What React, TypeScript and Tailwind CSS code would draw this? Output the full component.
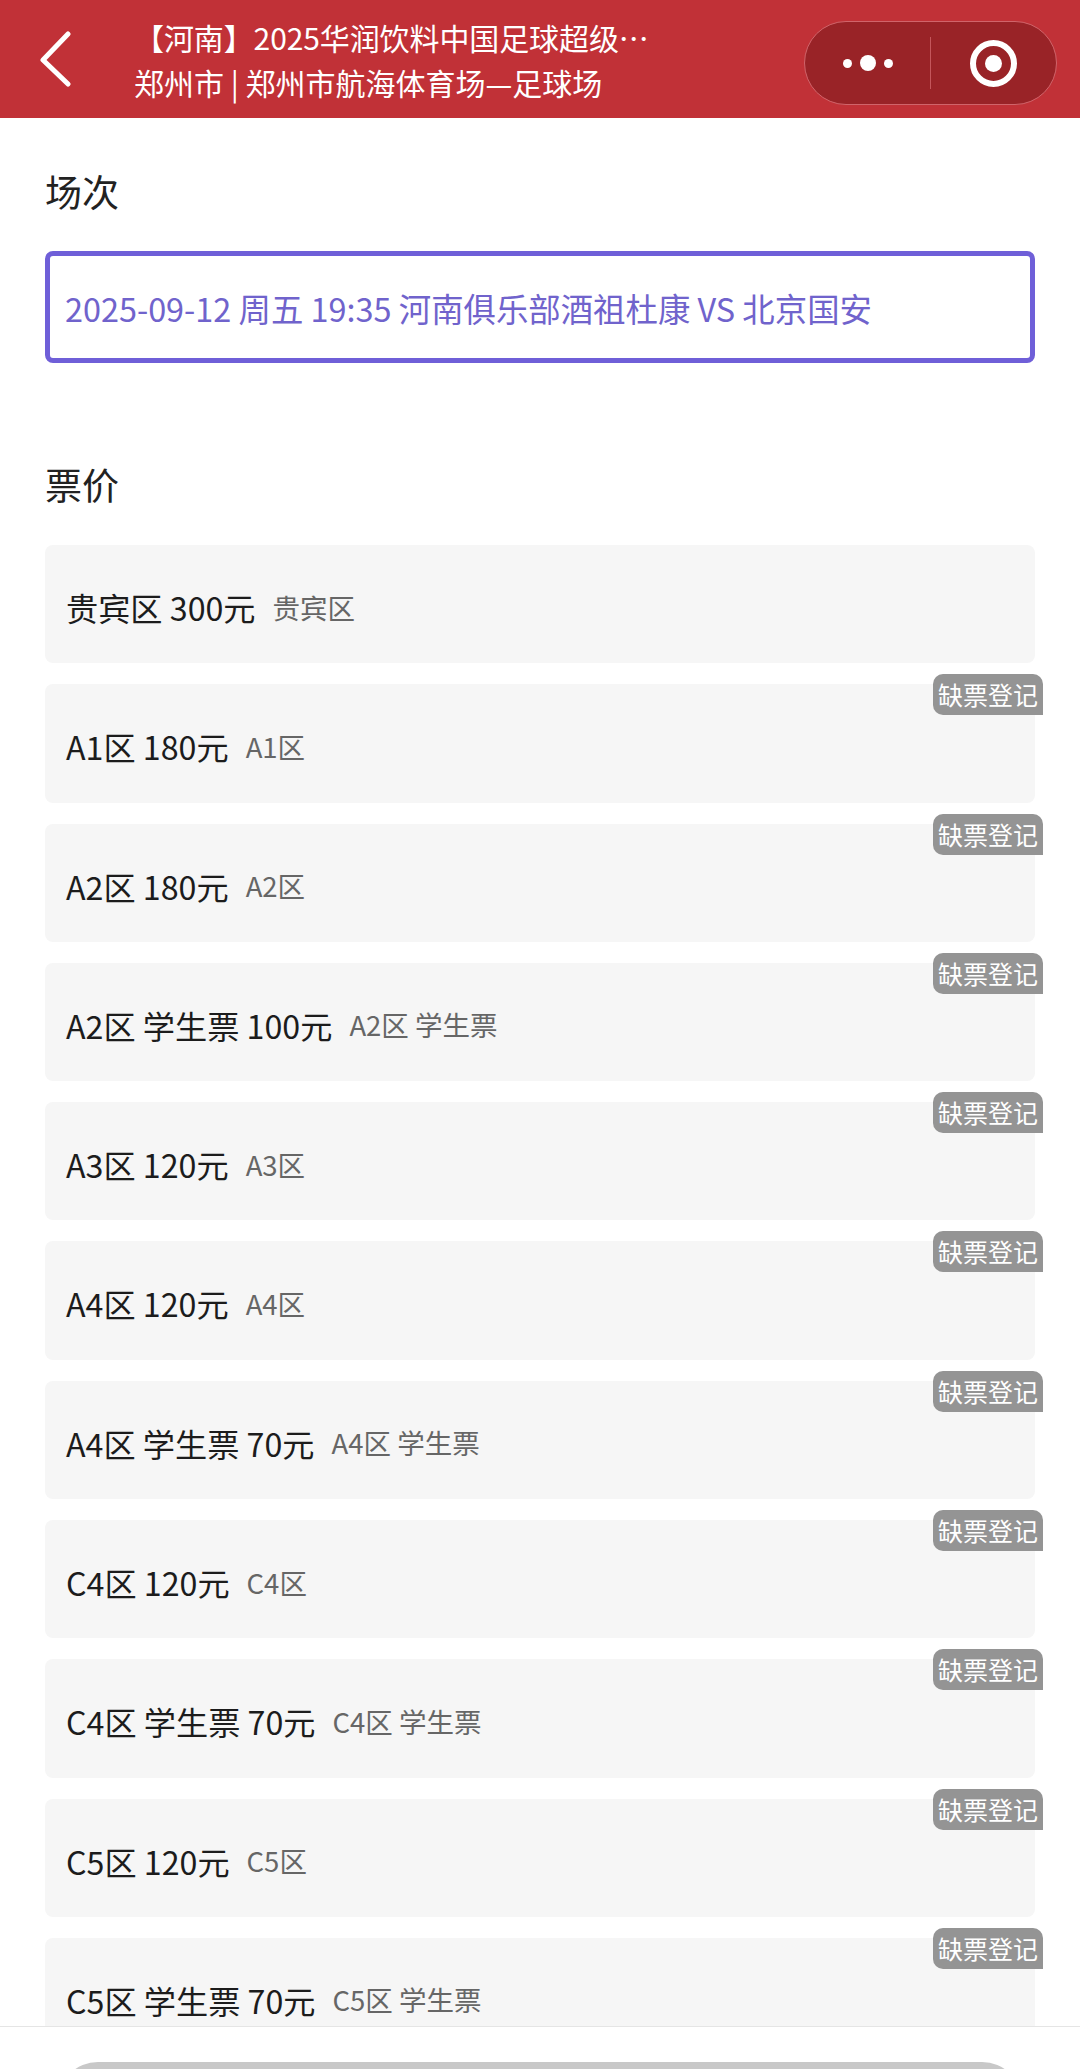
const tickets = [
  { name: '贵宾区 300元', sub: '贵宾区', soldOut: false },
  { name: 'A1区 180元', sub: 'A1区', soldOut: true },
  { name: 'A2区 180元', sub: 'A2区', soldOut: true },
  { name: 'A2区 学生票 100元', sub: 'A2区 学生票', soldOut: true },
  { name: 'A3区 120元', sub: 'A3区', soldOut: true },
  { name: 'A4区 120元', sub: 'A4区', soldOut: true },
  { name: 'A4区 学生票 70元', sub: 'A4区 学生票', soldOut: true },
  { name: 'C4区 120元', sub: 'C4区', soldOut: true },
  { name: 'C4区 学生票 70元', sub: 'C4区 学生票', soldOut: true },
  { name: 'C5区 120元', sub: 'C5区', soldOut: true },
  { name: 'C5区 学生票 70元', sub: 'C5区 学生票', soldOut: true },
];

const App = (): JSX.Element => {
  return (
    <div className="h-[2069px] w-full overflow-hidden flex flex-col bg-white font-['Noto_Sans_CJK_SC','Noto_Sans',sans-serif]">
      {/* Top bar */}
      <div className="h-[118px] shrink-0 flex items-center bg-[#c13137] text-white">
        <svg width="36" height="56" viewBox="0 0 36 56" fill="none" className="ml-[38px] mt-[-1px] shrink-0">
          <path d="M30 3 L5 29 L30 53" stroke="#fff" strokeWidth="5" strokeLinecap="round" strokeLinejoin="round" />
        </svg>
        <div className="ml-[60px] w-[540px]">
          <p className="text-[30px] leading-[46px] whitespace-nowrap tracking-[-0.1px]">【河南】2025华润饮料中国足球超级…</p>
          <p className="text-[30px] leading-[44px] whitespace-nowrap">郑州市 | 郑州市航海体育场—足球场</p>
        </div>
        {/* Capsule */}
        <div className="ml-auto mr-[23px] mt-[8px] w-[253px] h-[84px] shrink-0 rounded-full bg-[#992327] border border-[#d0646a] flex items-center">
          <div className="w-[125px] flex items-center justify-center gap-[8px]">
            <span className="w-[9px] h-[9px] rounded-full bg-white" />
            <span className="w-[16px] h-[16px] rounded-full bg-white" />
            <span className="w-[9px] h-[9px] rounded-full bg-white" />
          </div>
          <div className="w-px h-[52px] bg-[#c4565b]" />
          <div className="flex-1 flex items-center justify-center">
            <div className="w-[47px] h-[47px] rounded-full border-[6px] border-white flex items-center justify-center">
              <span className="w-[17px] h-[17px] rounded-full bg-white" />
            </div>
          </div>
        </div>
      </div>

      {/* Content */}
      <div className="flex-1 overflow-hidden px-[45px]">
        <h2 className="mt-[48px] text-[37px] leading-[50px] text-[#222]">场次</h2>
        <div className="mt-[35px] h-[112px] border-[5px] border-[#6f5fd8] rounded-[8px] flex items-center pl-[15px] pt-[3px]">
          <span className="text-[32.4px] text-[#7063cc] whitespace-nowrap">2025-09-12 周五 19:35 河南俱乐部酒祖杜康 VS 北京国安</span>
        </div>
        <h2 className="mt-[96px] text-[37px] leading-[50px] text-[#222]">票价</h2>
        <div className="mt-[36px] flex flex-col gap-[21px]">
          {tickets.map((t) => (
            <div key={t.name} className="relative h-[118.3px] shrink-0 rounded-[8px] bg-[#f6f6f6] flex items-center pl-[21px] pt-[6px]">
              <span className="text-[32.2px] text-[#1c1c1c] whitespace-nowrap">{t.name}</span>
              <span className="ml-[17px] text-[27.5px] text-[#666] whitespace-nowrap">{t.sub}</span>
              {t.soldOut && (
                <span className="absolute top-[-10px] right-[-8px] w-[110px] h-[41px] rounded-tl-[10px] rounded-tr-[10px] rounded-bl-[10px] bg-[#949494] text-white text-[25px] leading-[40px] text-center whitespace-nowrap">
                  缺票登记
                </span>
              )}
            </div>
          ))}
        </div>
      </div>

      {/* Bottom bar */}
      <div className="h-[43px] shrink-0 overflow-hidden border-t border-[#e5e5e5] bg-white px-[58px]">
        <div className="mt-[35px] h-[80px] rounded-full bg-[#c8c8c8]" />
      </div>
    </div>
  );
};

export default App;
